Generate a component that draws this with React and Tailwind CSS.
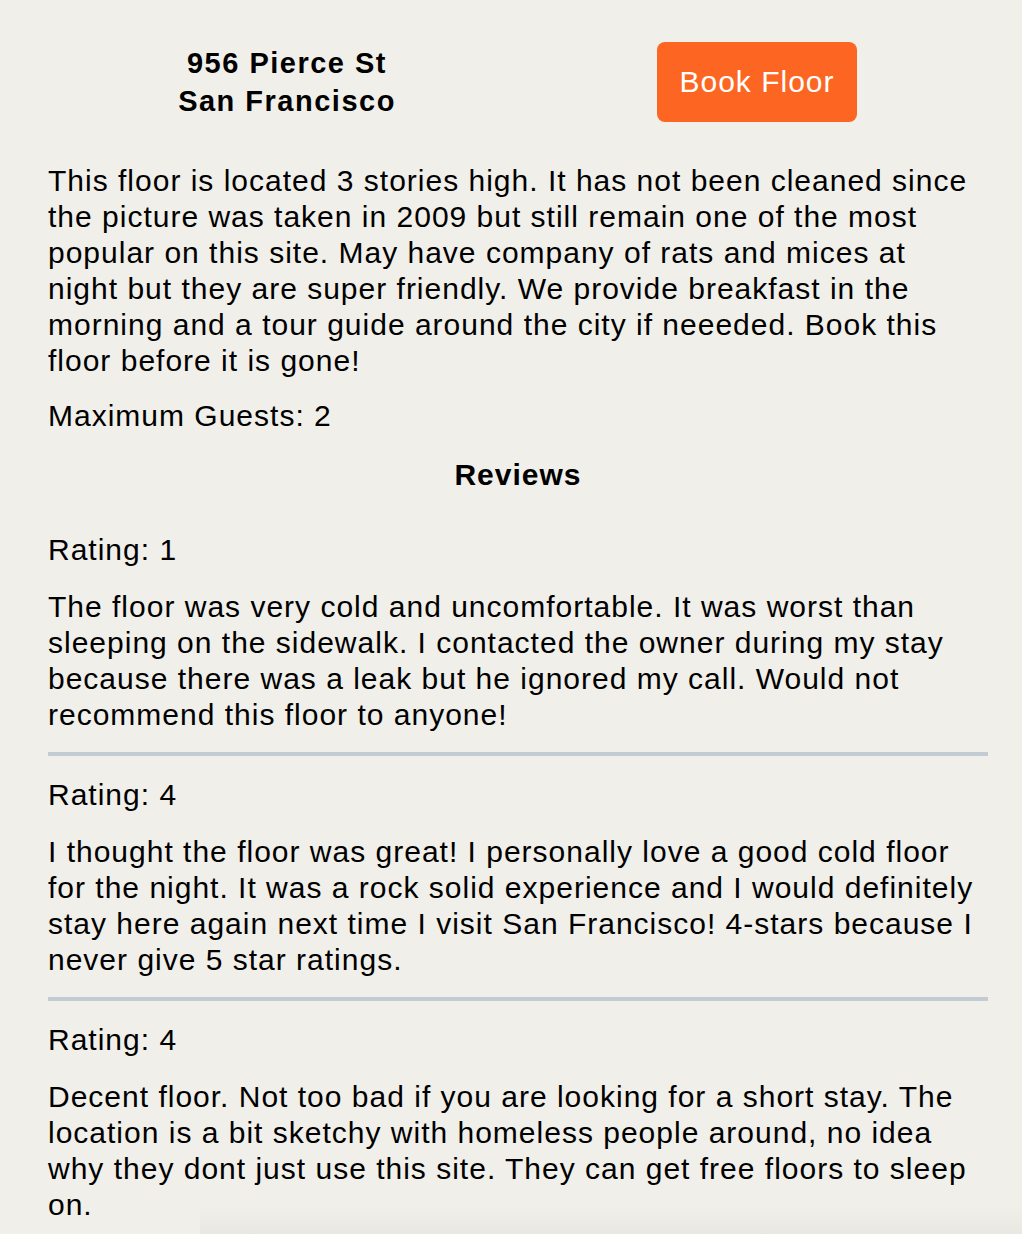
import React from 'react';

const reviews = [
  {
    rating: 1,
    text: 'The floor was very cold and uncomfortable. It was worst than sleeping on the sidewalk. I contacted the owner during my stay because there was a leak but he ignored my call. Would not recommend this floor to anyone!',
  },
  {
    rating: 4,
    text: 'I thought the floor was great! I personally love a good cold floor for the night. It was a rock solid experience and I would definitely stay here again next time I visit San Francisco! 4-stars because I never give 5 star ratings.',
  },
  {
    rating: 4,
    text: 'Decent floor. Not too bad if you are looking for a short stay. The location is a bit sketchy with homeless people around, no idea why they dont just use this site. They can get free floors to sleep on.',
  },
];

const App = () => {
  return (
    <div className="relative min-h-screen bg-[#f0efea] text-black font-['Liberation_Sans',Arial,sans-serif] text-[30px] leading-[36px] tracking-[1px] pl-[48px] pr-[42px] pt-[42px] pb-6">
      {/* header */}
      <div className="grid grid-cols-[478px_1fr] items-center -mr-[8px]">
        <h1 className="text-center font-bold text-[29px] leading-[38px] tracking-[1.5px]">
          956 Pierce St
          <br />
          San Francisco
        </h1>
        <div className="flex justify-center">
          <button className="w-[200px] h-[80px] rounded-lg bg-[#fd6622] text-white text-[30px] tracking-[1px]">
            Book Floor
          </button>
        </div>
      </div>

      <p className="mt-[41px]">
        This floor is located 3 stories high. It has not been cleaned since the picture was taken in 2009 but still remain one of the most popular on this site. May have company of rats and mices at night but they are super friendly. We provide breakfast in the morning and a tour guide around the city if neeeded. Book this floor before it is gone!
      </p>
      <p className="mt-[19px]">Maximum Guests: 2</p>

      <h2 className="mt-[23px] -mr-[8px] text-center font-bold">Reviews</h2>

      <div className="mt-[39px]">
        {reviews.map((r, i) => (
          <div key={i} className={i < reviews.length - 1 ? 'border-b-4 border-[#c2ccd3] -mr-[8px] pr-[8px] pb-[19px] mb-[21px]' : ''}>
            <p>Rating: {r.rating}</p>
            <p className="mt-[21px]">{r.text}</p>
          </div>
        ))}
      </div>

      {/* faint shadow along the bottom edge */}
      <div className="pointer-events-none absolute bottom-0 left-[200px] right-0 h-[40px] bg-gradient-to-b from-transparent to-[#e5e4de]" />
    </div>
  );
};

export default App;
